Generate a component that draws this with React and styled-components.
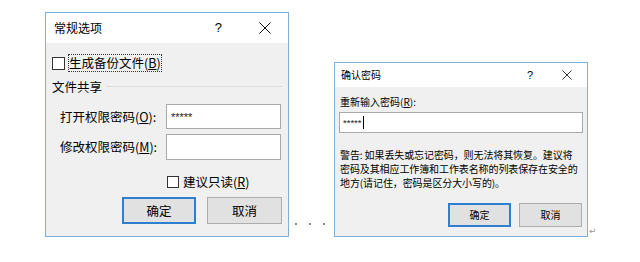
import styled, { createGlobalStyle } from 'styled-components';

const Global = createGlobalStyle`
  * { box-sizing: border-box; }
  body {
    margin: 0;
    background: #ffffff;
    font-family: "Noto Sans CJK SC", "Noto Sans", sans-serif;
    color: #000;
  }
`;

const Page = styled.div`
  display: flex;
  align-items: flex-end;
  padding: 12px 0 0 45px;
  width: 640px;
  height: 237px;
`;

const Dialog = styled.div`
  width: ${(p) => p.$w}px;
  height: ${(p) => p.$h}px;
  border: 1px solid #7fb0dc;
  background: #f0f0f0;
  display: flex;
  flex-direction: column;
  font-size: ${(p) => p.$fs}px;
  line-height: 14px;
`;

const TitleBar = styled.div`
  height: ${(p) => p.$h}px;
  background: #ffffff;
  display: flex;
  align-items: center;
  padding-left: ${(p) => p.$pl}px;
  padding-right: ${(p) => p.$pr}px;
`;

const Title = styled.span`
  flex: 1;
  font-size: ${(p) => p.$fs}px;
`;

const Help = styled.span`
  font-family: "Liberation Sans", sans-serif;
  font-size: ${(p) => p.$fs}px;
  margin-right: ${(p) => p.$gap}px;
`;

const Body = styled.div`
  flex: 1;
  display: flex;
  flex-direction: column;
  padding: ${(p) => p.$pad};
`;

const U = styled.span`
  text-decoration: underline;
`;

const Row = styled.div`
  display: flex;
  align-items: center;
  height: ${(p) => p.$h}px;
  margin-top: ${(p) => p.$mt}px;
  padding-left: ${(p) => p.$pl || 0}px;
`;

const Box = styled.span`
  width: ${(p) => p.$s || 12}px;
  height: ${(p) => p.$s || 12}px;
  border: 1px solid #333;
  background: #fff;
  flex: none;
`;

const FocusLabel = styled.span`
  margin-left: 3px;
  padding: 1px 1px;
  height: 18px;
  display: flex;
  align-items: center;
  outline: 1px dotted #333;
  outline-offset: -1px;
`;

const CheckText = styled.span`
  margin-left: 4px;
`;

const GroupHead = styled.div`
  display: flex;
  align-items: center;
  height: 16px;
  margin-top: 7px;

  &::after {
    content: '';
    flex: 1;
    height: 1px;
    background: #dcdcdc;
    margin-left: 4px;
    margin-top: -2px;
  }
`;

const FieldLabel = styled.span`
  width: 106px;
  margin-left: 8px;
`;

const Input = styled.div`
  width: ${(p) => p.$w}px;
  height: 100%;
  background: #fff;
  border: 1px solid #a9a9a9;
  display: flex;
  align-items: center;
  padding-left: ${(p) => p.$pl}px;
  font-family: "Liberation Sans", sans-serif;
  font-size: ${(p) => p.$fs}px;
  color: #222;
`;

const Caret = styled.span`
  width: 1px;
  height: 13px;
  background: #000;
  margin-left: 1px;
`;

const Buttons = styled.div`
  display: flex;
  justify-content: flex-end;
  gap: ${(p) => p.$gap}px;
  margin-top: ${(p) => p.$mt}px;
  padding-right: ${(p) => p.$pr || 0}px;
`;

const Button = styled.div`
  width: ${(p) => p.$w}px;
  height: ${(p) => p.$h}px;
  background: #e1e1e1;
  border: ${(p) => (p.$primary ? '2px solid #2f7fd0' : '1px solid #adadad')};
  display: flex;
  align-items: center;
  justify-content: center;
`;

const Label = styled.div`
  margin-top: ${(p) => p.$mt}px;
  padding-left: 1px;
  height: 14px;
`;

const Warning = styled.div`
  margin-top: 15px;
  padding-left: 1px;
  line-height: 14px;
  white-space: nowrap;
  letter-spacing: -0.1px;
`;

const Dots = styled.div`
  width: 45px;
  height: 4px;
  margin-bottom: 10px;
  display: flex;
  gap: 12px;
  padding-left: 6px;

  span {
    width: 2px;
    height: 2px;
    background: #8a8a8a;
  }
`;

const ReturnMark = styled.span`
  align-self: flex-end;
  margin-bottom: 1px;
  margin-left: 1px;
  font-size: 9px;
  line-height: 9px;
  color: #9a9a9a;
  font-family: "DejaVu Sans", sans-serif;
`;

function CloseIcon({ size }) {
  return (
    <svg width={size} height={size} viewBox="0 0 12 12">
      <path d="M0.5 0.5 L11.5 11.5 M11.5 0.5 L0.5 11.5" stroke="#111" strokeWidth="1" fill="none" />
    </svg>
  );
}

export default function App() {
  return (
    <>
      <Global />
      <Page>
        <Dialog $w={244} $h={225} $fs={12.5}>
          <TitleBar $h={30} $pl={8} $pr={17}>
            <Title $fs={12}>常规选项</Title>
            <Help $fs={13} $gap={37}>?</Help>
            <CloseIcon size={12} />
          </TitleBar>
          <Body $pad="0 6px 0 6px">
            <Row $h={18} $mt={11}>
              <Box $s={13} />
              <FocusLabel>
                生成备份文件(<U>B</U>)
              </FocusLabel>
            </Row>
            <GroupHead>文件共享</GroupHead>
            <Row $h={25} $mt={9}>
              <FieldLabel>
                打开权限密码(<U>O</U>):
              </FieldLabel>
              <Input $w={115} $pl={4} $fs={11}>
                *****
              </Input>
            </Row>
            <Row $h={26} $mt={5}>
              <FieldLabel>
                修改权限密码(<U>M</U>):
              </FieldLabel>
              <Input $w={115} $pl={4} $fs={11} />
            </Row>
            <Row $h={12} $mt={16} $pl={115}>
              <Box />
              <CheckText>
                建议只读(<U>R</U>)
              </CheckText>
            </Row>
            <Buttons $gap={11} $mt={9}>
              <Button $w={74} $h={27} $primary>
                确定
              </Button>
              <Button $w={75} $h={27}>
                取消
              </Button>
            </Buttons>
          </Body>
        </Dialog>

        <Dots>
          <span />
          <span />
          <span />
        </Dots>

        <Dialog $w={254} $h={175} $fs={10}>
          <TitleBar $h={24} $pl={6} $pr={15}>
            <Title $fs={10}>确认密码</Title>
            <Help $fs={11} $gap={29}>?</Help>
            <CloseIcon size={10} />
          </TitleBar>
          <Body $pad="0 4px 0 4px">
            <Label $mt={8}>
              重新输入密码(<U>R</U>):
            </Label>
            <Row $h={21} $mt={3}>
              <Input $w={244} $pl={3} $fs={9.5}>
                *****
                <Caret />
              </Input>
            </Row>
            <Warning>
              警告: 如果丢失或忘记密码，则无法将其恢复。建议将
              <br />
              密码及其相应工作簿和工作表名称的列表保存在安全的
              <br />
              地方(请记住，密码是区分大小写的)。
            </Warning>
            <Buttons $gap={8} $mt={13} $pr={1}>
              <Button $w={63} $h={24} $primary>
                确定
              </Button>
              <Button $w={63} $h={24}>
                取消
              </Button>
            </Buttons>
          </Body>
        </Dialog>
        <ReturnMark>↵</ReturnMark>
      </Page>
    </>
  );
}
